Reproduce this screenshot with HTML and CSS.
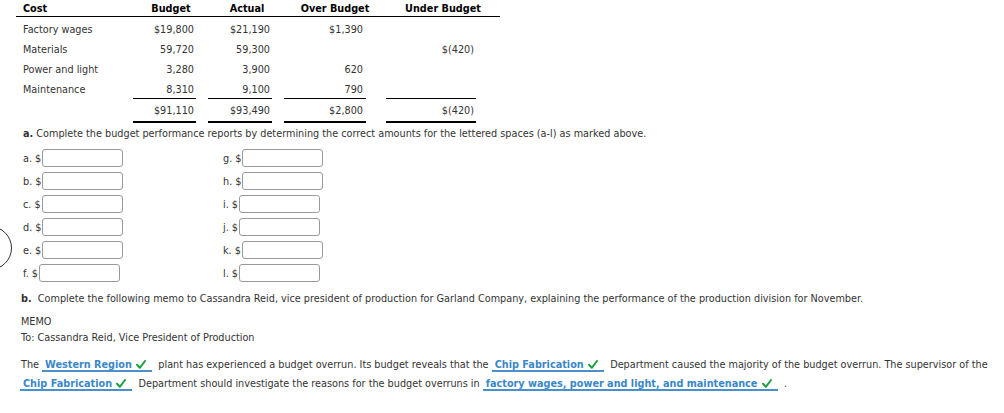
FILE: index.html
```html
<!DOCTYPE html>
<html lang="en">
<head>
<meta charset="utf-8">
<title>Budget performance report</title>
<link rel="stylesheet" href="styles.css">
</head>
<body>
<div class="page">
  <div class="marker"></div>
  <div class="report">
    <div class="row head">
      <div class="c cost">Cost</div>
      <div class="c bud hc">Budget</div>
      <div class="c act hc">Actual</div>
      <div class="c over hc">Over Budget</div>
      <div class="c under hc">Under Budget</div>
    </div>
    <div class="row">
      <div class="c cost">Factory wages</div>
      <div class="c bud num">$19,800</div>
      <div class="c act num">$21,190</div>
      <div class="c over num">$1,390</div>
      <div class="c under num"></div>
    </div>
    <div class="row">
      <div class="c cost">Materials</div>
      <div class="c bud num">59,720</div>
      <div class="c act num">59,300</div>
      <div class="c over num"></div>
      <div class="c under num">$(420)</div>
    </div>
    <div class="row">
      <div class="c cost">Power and light</div>
      <div class="c bud num">3,280</div>
      <div class="c act num">3,900</div>
      <div class="c over num">620</div>
      <div class="c under num"></div>
    </div>
    <div class="row">
      <div class="c cost">Maintenance</div>
      <div class="c bud num">8,310</div>
      <div class="c act num">9,100</div>
      <div class="c over num">790</div>
      <div class="c under num"></div>
    </div>
    <div class="row total">
      <div class="c cost"></div>
      <div class="c bud num">$91,110</div>
      <div class="c act num">$93,490</div>
      <div class="c over num">$2,800</div>
      <div class="c under num">$(420)</div>
    </div>
  </div>

  <p class="qa"><b>a.</b> Complete the budget performance reports by determining the correct amounts for the lettered spaces (a-l) as marked above.</p>

  <div class="inputs">
    <label class="field">a. $<input type="text"></label>
    <label class="field">b. $<input type="text"></label>
    <label class="field">c. $<input type="text"></label>
    <label class="field">d. $<input type="text"></label>
    <label class="field">e. $<input type="text"></label>
    <label class="field">f. $<input type="text"></label>
    <label class="field">g. $<input type="text"></label>
    <label class="field">h. $<input type="text"></label>
    <label class="field">i. $<input type="text"></label>
    <label class="field">j. $<input type="text"></label>
    <label class="field">k. $<input type="text"></label>
    <label class="field">l. $<input type="text"></label>
  </div>

  <p class="qb"><b>b.</b>&nbsp; Complete the following memo to Cassandra Reid, vice president of production for Garland Company, explaining the performance of the production division for November.</p>

  <div class="memo">
    <div>MEMO</div>
    <div>To: Cassandra Reid, Vice President of Production</div>
  </div>

  <div class="memo-body">
    <div class="line">The <span class="ans">Western Region <svg class="check" viewBox="0 0 10 9" width="10" height="9"><path d="M1 4.8 L3.8 7.8 L9 1"/></svg></span> plant has experienced a budget overrun. Its budget reveals that the <span class="ans">Chip Fabrication <svg class="check" viewBox="0 0 10 9" width="10" height="9"><path d="M1 4.8 L3.8 7.8 L9 1"/></svg></span> Department caused the majority of the budget overrun. The supervisor of the</div>
    <div class="line"><span class="ans first">Chip Fabrication <svg class="check" viewBox="0 0 10 9" width="10" height="9"><path d="M1 4.8 L3.8 7.8 L9 1"/></svg></span> Department should investigate the reasons for the budget overruns in <span class="ans">factory wages, power and light, and maintenance <svg class="check" viewBox="0 0 10 9" width="10" height="9"><path d="M1 4.8 L3.8 7.8 L9 1"/></svg></span> .</div>
  </div>
</div>
</body>
</html>
```

FILE: styles.css
```css
* { box-sizing: border-box; }

body {
  margin: 0;
  background: #fff;
  color: #333;
  font-family: "DejaVu Sans", Verdana, sans-serif;
  font-size: 9.7px;
}

.page {
  position: relative;
  padding-left: 16px;
}

.marker {
  position: absolute;
  left: -32px;
  top: 226px;
  width: 44px;
  height: 44px;
  border: 1.5px solid #333;
  border-radius: 50%;
}

/* report table */
.report { width: 484px; }

.row {
  display: flex;
  align-items: center;
  height: 20px;
  padding-top: 4px;
}

.head {
  height: 17px;
  padding-top: 1px;
  border-bottom: 1px solid #000;
  color: #000;
  font-weight: bold;
}

.c { flex: none; white-space: nowrap; }
.cost { width: 117px; padding-left: 7px; }
.bud { width: 63px; }
.act { width: 64px; margin-left: 12px; }
.over { width: 82px; margin-left: 12px; }
.under { width: 90px; margin-left: 20px; }

.hc { display: flex; justify-content: center; }
.head .bud { padding-left: 13px; }
.head .act { padding-left: 14px; }
.head .over { padding-left: 20px; }
.head .under { padding-left: 24px; }

.num { text-align: right; padding-right: 2px; }
.over.num { padding-right: 3px; }

.total {
  height: 25px;
  margin-top: 1px;
  padding-top: 0;
  align-items: stretch;
}
.total .c { line-height: 22px; padding-top: 1px; }
.total .num {
  border-top: 1px solid #000;
  border-bottom: 2px solid #000;
}

/* part a */
.qa {
  margin: 3px 0 0;
  padding-left: 7px;
  line-height: 16px;
}

.inputs {
  display: grid;
  grid-template-columns: 200px 200px;
  grid-template-rows: repeat(6, 18px);
  grid-auto-flow: column;
  row-gap: 5px;
  margin-top: 7px;
  padding-left: 7px;
}

.field {
  display: flex;
  align-items: center;
  height: 18px;
  padding-top: 1px;
  white-space: nowrap;
}

.field input {
  width: 81px;
  height: 18px;
  margin: -1px 0 0 1px;
  padding: 0 3px;
  border: 1px solid #9a9a9a;
  border-radius: 3px;
  background: #fff;
  font: inherit;
}

/* part b */
.qb {
  margin: 9px 0 0;
  padding-left: 5px;
  line-height: 16px;
}

.memo {
  margin-top: 7px;
  padding-left: 5px;
  line-height: 16px;
}

.memo-body {
  margin-top: 9px;
  padding-left: 5px;
  line-height: 19px;
  white-space: nowrap;
}

.ans {
  color: #3a87c8;
  font-weight: bold;
  border-bottom: 2px solid #4a90cc;
  padding: 0 6px 0 3px;
  margin-right: 3px;
}
.ans.first { margin-left: -1px; }

.check {
  display: inline-block;
  vertical-align: -1px;
  margin-left: 1px;
}
.check path {
  fill: none;
  stroke: #1f9e45;
  stroke-width: 2;
  stroke-linecap: round;
  stroke-linejoin: round;
}
```
